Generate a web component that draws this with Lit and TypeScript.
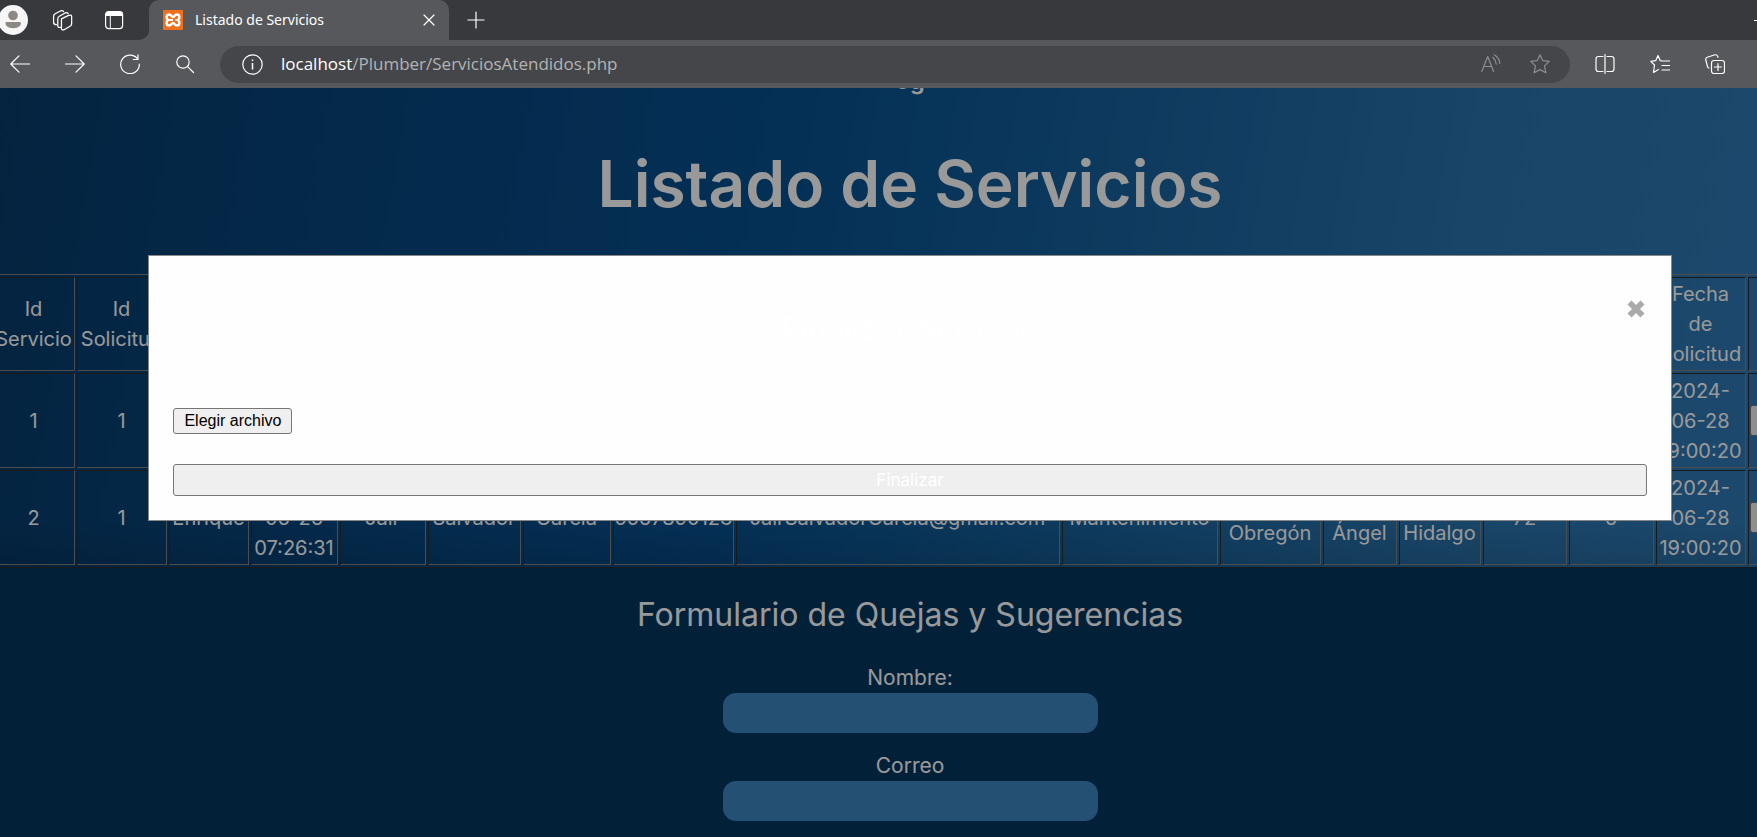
import { LitElement, html, css, svg } from "lit";
import { customElement } from "lit/decorators.js";

const WIDTHS = [82, 90, 80, 87, 86, 93, 88, 121, 324, 156, 101, 74, 82, 84, 85, 90, 80];

const HEADERS = [
  "Id Servicio", "Id Solicitud", "Nombre", "Fecha", "Nombre", "Apellido Paterno", "Apellido Materno",
  "Teléfono", "Correo", "Servicio", "Alcaldía", "Colonia", "Calle", "Número exterior", "Número interior",
  "Fecha de Solicitud", "",
];

const ROWS = ["1", "2"].map((id) => [
  id, "1", "Enrique", "2024-06-26 07:26:31", "Jair", "Salvador", "Garcia", "5567890123",
  "JairSalvadorGarcia@gmail.com", "Mantenimiento", "Álvaro Obregón", "San Ángel", "Miguel Hidalgo",
  "72", "6", "2024-06-28 19:00:20",
]);

const icon = (body: unknown, size = 20) => html`
  <svg width=${size} height=${size} viewBox="0 0 20 20" fill="none" stroke="currentColor"
    stroke-width="1.2" stroke-linecap="round" stroke-linejoin="round" aria-hidden="true">${body}</svg>`;

const STAR = "M10 .8 12.8 6.7 19.2 7.4 14.5 11.9 15.9 18.8 10 15.6 4.1 18.8 5.5 11.9 .8 7.4 7.2 6.7Z";

@customElement("browser-bar")
class BrowserBar extends LitElement {
  static styles = css`
    :host { display: block; position: relative; background: #57585c; color: #fff;
      font-family: "Noto Sans", "Open Sans", sans-serif; }
    button { display: flex; padding: 0; border: 0; background: none; color: inherit; font: inherit; }
    svg { display: block; flex: none; }
    .tabs { display: flex; height: 40px; background: #38393c; overflow: hidden; }
    .left { display: flex; align-items: center; gap: 24px; padding-right: 18px; background: #38393c;
      border-bottom-right-radius: 10px; }
    .fill { background: #57585c; display: flex; }
    .tab { display: flex; align-items: center; box-sizing: border-box; width: 300px; padding: 0 10px 0 14px;
      background: #57585c; border-radius: 10px 10px 0 0; }
    .title { flex: 1; margin-left: 12px; font-size: 14px; line-height: 20px; }
    .tabwrap { background: linear-gradient(#38393c 50%, #57585c 50%); display: flex; }
    .rest { flex: 1; display: flex; align-items: center; justify-content: space-between; padding-left: 17px;
      background: #38393c; border-bottom-left-radius: 10px; }
    .min { width: 3px; height: 1px; background: #fff; }
    .tools { display: flex; align-items: center; height: 48px; padding: 0 32px 0 10px; gap: 35px; }
    .address { flex: 1; display: flex; align-items: center; height: 37px; margin-left: -10px; padding: 0 20px 0 22px;
      border-radius: 19px; background: #454649; }
    .url { flex: 1; margin-left: 18px; font-family: "Open Sans", sans-serif; font-size: 17px; line-height: 24px;
      color: #b3b4b5; }
    .host { color: #fff; }
    .dim { display: flex; gap: 29px; color: #8d8e90; }
    .right { display: flex; gap: 35px; margin-left: -10px; }
  `;
  render() {
    return html`
      <div class="tabs">
        <div class="fill"><div class="left">
          <button aria-label="Perfil"><svg width="28" height="30" viewBox="2 0 28 30">
            <circle cx="15" cy="15" r="15" fill="#f6f6f6"/><circle cx="15" cy="10.500" r="4.800" fill="#8b8784"/>
            <path d="M8.500 17h13.400c.6 0 1 .5 1 1 0 3.300-3.300 5.200-7.800 5.200S7.500 21.300 7.500 18c0-.5.400-1 1-1Z" fill="#8b8784"/></svg></button>
          <button aria-label="Áreas de trabajo">${icon(svg`
            <path d="M9 8.500 15.300 5.300Q18.500 4 18.700 6V13Q18.700 14.500 17.500 15.200L12 18.500Q9.500 19.800 9 18Z"/>
            <path d="M8 16.500Q5.500 17 5.500 15V8.500Q5.500 6.700 7 6L12.500 2.800Q14.500 2 15.500 3.600"/>
            <path d="M4.200 14Q1.500 14 1.500 12V6Q1.500 4.500 3 3.600L8 .9Q10 .2 11 1.400"/>`, 21)}</button>
          <button aria-label="Acciones de pestañas"><svg width="34" height="20" viewBox="-7 0 34 20">
            <rect x="1.600" y="1.600" width="17" height="17" rx="3" fill="none" stroke="#fff" stroke-width="1.200"/>
            <path d="M1.600 6V4.500q0-3 3-3h11q3 0 3 3V6Z" fill="#fff"/><path d="M6.300 6v12.500" stroke="#fff"/></svg></button>
        </div></div>
        <div class="tabwrap"><div class="tab">
          <svg width="20" height="20" viewBox="0 0 20 20"><rect width="20" height="20" rx="1" fill="#ee701e"/>
            <path d="M6.200 4.500C8.500 4.500 8.500 7 10 7s1.500-2.500 3.800-2.500c3.400 0 3.200 4.500.7 5.500 2.500 1 2.700 5.500-.7 5.500-2.300 0-2.300-2.500-3.800-2.500s-1.500 2.500-3.800 2.500c-3.400 0-3.200-4.500-.7-5.500-2.500-1-2.700-5.500.7-5.500Z" fill="none" stroke="#fff" stroke-width="2.400"/>
            <path d="M5.500 10h4.500" stroke="#fff" stroke-width="1.800"/></svg>
          <span class="title">Listado de Servicios</span>
          <button aria-label="Cerrar pestaña">${icon(svg`<path d="M5 5 15 15M15 5 5 15"/>`, 20)}</button>
        </div></div>
        <div class="rest">
          <button aria-label="Nueva pestaña">${icon(svg`<path d="M10 2v16M2 10h16"/>`)}</button>
          <span class="min"></span>
        </div>
      </div>
      <div class="tools">
        <button aria-label="Atrás">${icon(svg`<path d="M19.500 10H.8M9 1.800.8 10 9 18.200"/>`)}</button>
        <button aria-label="Adelante">${icon(svg`<path d="M.5 10H19.200M11 1.800 19.200 10 11 18.200"/>`)}</button>
        <button aria-label="Actualizar">${icon(svg`<path d="M17.600 5A9.300 9.300 0 1 0 19.300 10M18 .8V5.500H13.300"/>`)}</button>
        <button aria-label="Buscar">${icon(svg`<circle cx="8" cy="8" r="6.200"/><path d="M12.600 12.600 18.500 18.500"/>`)}</button>
        <div class="address">
          <svg width="21" height="21" viewBox="0 0 21 21" fill="none" stroke="#fff" stroke-width="1.200">
            <circle cx="10.500" cy="10.500" r="9.700"/><path d="M10.500 9v6.500M10.500 5.500v1.600" stroke-width="1.500"/></svg>
          <span class="url"><span class="host">localhost</span>/Plumber/ServiciosAtendidos.php</span>
          <span class="dim">
            <button aria-label="Leer en voz alta">${icon(svg`<path d="M.8 17.500 6.700 2.500 12.600 17.500M3 12.500h7.500M12 3.500Q14.800 6 15.200 10M13.200.8Q18.500 4 18.800 9.500"/>`)}</button>
            <button aria-label="Favorito">${icon(svg`<path d=${STAR}/>`)}</button>
          </span>
        </div>
        <div class="right">
          <button aria-label="Pantalla dividida">${icon(svg`<path d="M8 2.500H3.500q-2.500 0-2.500 2.500v10q0 2.500 2.500 2.500H8M12 2.500h4.500q2.500 0 2.500 2.500v10q0 2.500-2.500 2.500H12M10 .5v19"/>`)}</button>
          <button aria-label="Favoritos">${icon(svg`<path d="M12.300 7 10.300 6.700 8 1.500 5.700 6.700.8 7.300 4.500 11 3.500 18.500 8.500 15.500M12.300 7H19.500M12 11.500h7.500M12 16h7.500"/>`)}</button>
          <button aria-label="Colecciones">${icon(svg`<rect x="6.500" y="6.500" width="13" height="13" rx="2.500"/><path d="M13 9.500v7M9.500 13h7M4 14Q3 14 2.500 12.500L.8 6Q.3 4 2.300 3.300L10 .8Q12 .5 12.800 2.500L13 3.500"/>`)}</button>
        </div>
      </div>`;
  }
}

@customElement("app-root")
class AppRoot extends LitElement {
  static styles = css`
    :host { display: flex; flex-direction: column; height: 100vh; overflow: hidden; background: #05365f;
      font-family: Inter, sans-serif; font-size: 20px; line-height: 30px; color: #fff; }
    .view { flex: 1; min-height: 0; position: relative; overflow: hidden; }
    .page { margin: 0 -105px 0 -42px; }
    .hero { background: linear-gradient(to top, rgba(0, 0, 0, .12), transparent 48px),
        linear-gradient(100deg, #063a66 0%, #084175 12%, #07508f 42%, #0f5a96 52%, #2a74ae 78%, #317bb8 100%); }
    .brand { height: 54px; margin-top: -34px; font-size: 24px; line-height: 54px; font-weight: 600; }
    .brand, h1, h2, .field { text-align: center; }
    h1 { margin: 0; padding: 28px 0 42px; font-size: 64px; line-height: 96px; font-weight: 600; }
    table { table-layout: fixed; margin: 0 auto; width: min-content; border: 1px solid; border-spacing: 2px;
      border-color: #808080 #2c2c2c #2c2c2c #808080; }
    td, th { box-sizing: border-box; height: 95px; padding: 1px; border: 1px solid; border-color: #2c2c2c #808080 #808080 #2c2c2c;
      font-weight: 400; text-align: center; vertical-align: middle; }
    th { height: 94px; }
    td button { box-sizing: border-box; display: block; width: 100%; height: 31px; padding: 0; border: 1px solid #767676; border-radius: 3px;
      background: #efefef; color: #fff; font: inherit; font-size: 16px; }
    h2 { margin: 0; padding: 23px 0 24px; font-size: 32px; line-height: 48px; font-weight: 400; }
    .field { display: block; margin: 0 auto 18px; width: 375px; font-size: 21px; }
    .field input { display: block; box-sizing: border-box; width: 100%; height: 40px; border: 0; border-radius: 13px;
      background: #3d85c2; padding: 0 12px; font: inherit; color: #fff; }
    .overlay { position: absolute; inset: 0 -105px 0 -42px; background: rgba(0, 0, 0, .4); }
    .modal { box-sizing: border-box; width: 80%; margin: 167px auto 0; padding: 24px; border: 1px solid #888;
      background: #fefefe; }
    .top { display: flex; justify-content: flex-end; height: 28px; }
    .close { height: 50px; padding: 8px 1px 0; border: 0; background: none; color: #aaa; }
    .close svg { display: block; }
    .modal h3 { margin: 0 0 28px; font-size: 31px; line-height: 42px; font-weight: 600; text-align: center; }
    .upload { display: block; text-align: center; }
    .pick { box-sizing: border-box; height: 26px; padding: 0 10px; border: 1px solid #767676; border-radius: 3px;
      background: #efefef; color: #000; font: inherit; }
    .row { display: flex; align-items: center; gap: 6px; margin: 0 0 30px; font: 16px/24px "Liberation Sans", sans-serif; }
    .submit { display: block; width: 100%; height: 32px; padding: 0; border: 1px solid #767676; border-radius: 3px;
      background: #efefef; color: #fff; font: inherit; font-size: 17px; }
  `;
  private pick() {
    (this.renderRoot.querySelector(".native") as HTMLInputElement).click();
  }
  render() {
    return html`
      <browser-bar></browser-bar>
      <div class="view">
        <div class="page">
          <div class="hero">
            <div class="brand">og</div>
            <h1>Listado de Servicios</h1>
            <table>
              <colgroup>${WIDTHS.map((w) => html`<col style="width:${w}px">`)}</colgroup>
              <thead><tr>${HEADERS.map((h) => html`<th scope="col">${h}</th>`)}</tr></thead>
              <tbody>${ROWS.map((r) => html`<tr>${r.map((c) => html`<td>${c}</td>`)}<td><button aria-label="Finalizar"></button></td></tr>`)}</tbody>
            </table>
          </div>
          <h2>Formulario de Quejas y Sugerencias</h2>
          <label class="field">Nombre:<input type="text"></label>
          <label class="field">Correo<input type="email"></label>
        </div>
        <div class="overlay">
          <div class="modal" role="dialog" aria-label="Finalizar Servicio">
            <div class="top"><button class="close" aria-label="Cerrar">
              <svg width="20" height="34" viewBox="0 0 20 34"><path d="M3.500 10.500 16.500 23.500M16.500 10.500 3.500 23.500" stroke="#aaa" stroke-width="5.800"/></svg>
            </button></div>
            <h3>Finalizar Servicio</h3>
            <label class="upload" for="foto">Subir Foto:</label>
            <div class="row">
              <input class="native" id="foto" type="file" hidden>
              <button class="pick" @click=${this.pick}>Elegir archivo</button>
              <span>No se ha seleccionado ningún archivo</span>
            </div>
            <button class="submit">Finalizar</button>
          </div>
        </div>
      </div>`;
  }
}
